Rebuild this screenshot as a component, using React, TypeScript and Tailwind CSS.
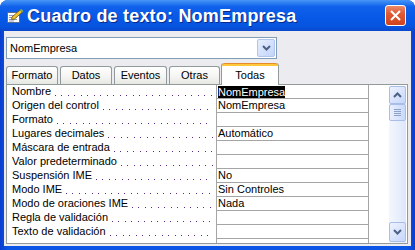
import React from "react";

const rows: [string, string][] = [
  ["Nombre", "NomEmpresa"],
  ["Origen del control", "NomEmpresa"],
  ["Formato", ""],
  ["Lugares decimales", "Automático"],
  ["Máscara de entrada", ""],
  ["Valor predeterminado", ""],
  ["Suspensión IME", "No"],
  ["Modo IME", "Sin Controles"],
  ["Modo de oraciones IME", "Nada"],
  ["Regla de validación", ""],
  ["Texto de validación", ""],
  ["", ""],
];

function Chevron({ up }: { up?: boolean }) {
  return (
    <svg width="9" height="6" viewBox="0 0 9 6">
      <path
        d={up ? "M1 5 L4.5 1.5 L8 5" : "M1 1 L4.5 4.5 L8 1"}
        fill="none"
        stroke="#4d6185"
        strokeWidth="2"
      />
    </svg>
  );
}

export default function App() {
  return (
    <div
      className="w-[415px] h-[250px] bg-white"
      style={{ fontFamily: '"Liberation Sans", Arial, sans-serif' }}
    >
      <div className="w-[415px] h-[250px] rounded-t-[8px] overflow-hidden flex flex-col bg-[linear-gradient(to_right,#0a3fd0,#0b55e6_2%,#0b55e6_98%,#0a3fd0)]">
        {/* title bar */}
        <div className="h-[31px] flex items-center bg-[linear-gradient(to_bottom,#4a96f8_0%,#3282f2_8%,#0f60ea_22%,#0758e6_60%,#0654e0_85%,#0a48cc_100%)]">
          <div className="ml-[6px] w-[18px] h-[16px] mt-[1px]">
            <svg width="18" height="16" viewBox="0 0 18 16">
              <rect x="1.5" y="4.5" width="12" height="10" fill="#fff" stroke="#5a6e8c" />
              <path d="M3 7.5h6M3 9.5h8M3 11.5h8M3 13h5" stroke="#8a9ab8" strokeWidth="1" />
              <path d="M6 9 L14 2 L16.5 4 L8.5 11 L5.5 11.5 Z" fill="#f2c230" stroke="#6b5410" strokeWidth="0.8" />
              <path d="M14 2 L16.5 4 L17.5 3 L15 1 Z" fill="#7fbf5a" />
            </svg>
          </div>
          <div className="ml-[3px] text-white font-bold text-[18px] leading-none tracking-[0.2px] [text-shadow:1px_1px_0_#0a2a8a]">
            Cuadro de texto: NomEmpresa
          </div>
          <div className="ml-auto mr-[9px] w-[21px] h-[21px] rounded-[3px] border border-white flex items-center justify-center bg-[linear-gradient(to_bottom,#ea8a6a,#df5a34_40%,#d64b24_80%,#cc431f)]">
            <svg width="11" height="11" viewBox="0 0 11 11">
              <path d="M1 1 L10 10 M10 1 L1 10" stroke="#fff" strokeWidth="2" />
            </svg>
          </div>
        </div>

        {/* client area */}
        <div className="flex-1 mx-[4px] mb-[4px] bg-[#ecebef] flex flex-col pl-[2px]">
          {/* combo */}
          <div className="mt-[6px] w-[271px] h-[22px] border border-[#7f9db9] bg-white flex items-center">
            <span className="pl-[3px] text-[11px] text-black">NomEmpresa</span>
            <div className="ml-auto mr-[1px] w-[18px] h-[18px] rounded-[2px] border border-[#b2c5ef] flex items-center justify-center bg-[linear-gradient(135deg,#e6eefe,#c3d4fa)]">
              <Chevron />
            </div>
          </div>

          {/* tabs */}
          <div className="mt-[4px] h-[21px] flex items-end relative z-10">
            {[
              ["Formato", 52],
              ["Datos", 52],
              ["Eventos", 53],
              ["Otras", 51],
            ].map(([t, w], i) => (
              <div
                key={t as string}
                style={{ width: w as number, marginRight: i < 3 ? 2 : 0 }}
                className="h-[18px] border border-[#919b9c] border-b-0 rounded-t-[3px] flex items-center justify-center text-[11px] text-black bg-[linear-gradient(to_bottom,#ffffff,#f4f4f2_60%,#e6e6e2)]"
              >
                {t}
              </div>
            ))}
            <div className="ml-[1px] w-[58px] h-[22px] -mb-[1px] border border-[#919b9c] border-t-0 border-b-0 rounded-t-[3px] bg-white flex flex-col">
              <div className="h-[3px] rounded-t-[3px] bg-[#ffc83c] border-t border-[#e68b2c]" />
              <div className="flex-1 flex items-center justify-center text-[11px] text-black pb-[1px]">Todas</div>
            </div>
          </div>

          {/* property grid */}
          <div className="w-[402px] h-[160px] border border-[#919b9c] bg-white flex overflow-hidden">
            <div className="w-[382px] pl-[5px] flex flex-col overflow-hidden">
              {rows.map(([label, value], i) => (
                <div key={i} className="h-[14px] shrink-0 flex text-[11px] leading-[13px]">
                  <div className="w-[204px] flex">
                    <span className="shrink-0 whitespace-nowrap text-black">{label}</span>
                    <div className="flex-1 min-w-0 mr-[3px] ml-[4px] mt-[10px] h-[1px] bg-[linear-gradient(to_right,#5a2a86_0px,#5a2a86_1px,transparent_1px,transparent_6px,#5a2a86_6px,#5a2a86_7px,transparent_7px)] bg-[length:13px_1px] bg-repeat-x" />
                  </div>
                  <div className="w-[153px] border-l border-r border-b border-[#a5a5a5] whitespace-nowrap overflow-hidden pl-[1px] text-black">
                    {i === 0 ? (
                      <span className="bg-black text-white inline-block leading-[12px] mt-[1px]">{value}</span>
                    ) : (
                      value
                    )}
                  </div>
                </div>
              ))}
            </div>
            {/* scrollbar */}
            <div className="w-[17px] mt-[1px] flex flex-col bg-[linear-gradient(to_right,#f3f6fd,#e9effc_50%,#dde7fb)]">
              <div className="h-[18px] rounded-[2px] border border-[#a9bde9] flex items-center justify-center bg-[linear-gradient(135deg,#eef3fe,#c5d6fb)]">
                <Chevron up />
              </div>
              <div className="h-[17px] rounded-[2px] border border-[#a9bde9] flex flex-col items-center justify-center gap-[1px] bg-[linear-gradient(to_right,#e9f0fe,#c9d9fb)]">
                <div className="w-[7px] h-[1px] bg-[#8ca2c9]" />
                <div className="w-[7px] h-[1px] bg-[#8ca2c9]" />
                <div className="w-[7px] h-[1px] bg-[#8ca2c9]" />
                <div className="w-[7px] h-[1px] bg-[#8ca2c9]" />
              </div>
              <div className="flex-1" />
              <div className="h-[20px] mb-[1px] rounded-[2px] border border-[#a9bde9] flex items-center justify-center bg-[linear-gradient(135deg,#eef3fe,#c5d6fb)]">
                <Chevron />
              </div>
            </div>
          </div>
        </div>
      </div>
    </div>
  );
}
